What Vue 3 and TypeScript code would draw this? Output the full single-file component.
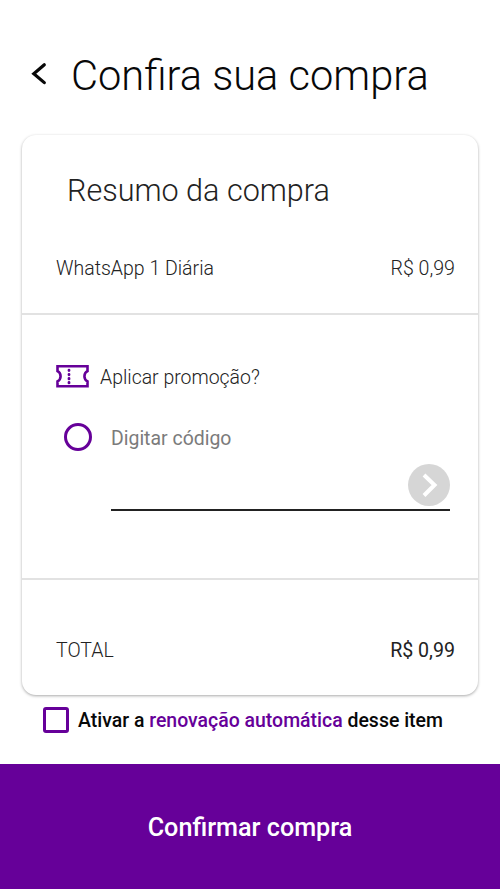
<script setup lang="ts">
const product = 'WhatsApp 1 Diária'
const price = 'R$ 0,99'
</script>

<template>
  <main class="screen">
    <header class="header">
      <svg class="back" viewBox="0 0 18 24"><path d="M14.300 2.700 3.800 11.700l10.500 8.900" /></svg>
      <h1>Confira sua compra</h1>
    </header>
    <section class="card">
      <div class="summary">
        <h2>Resumo da compra</h2>
        <div class="line"><span>{{ product }}</span><span class="price">{{ price }}</span></div>
      </div>
      <div class="promo">
        <div class="promo-title">
          <svg class="ticket" viewBox="0 0 34 24">
            <path d="M1.500 1.300H31.500V6.200C27.400 8.300 27.400 14.300 31.500 16.400V21.300H1.500V16.400C5.600 14.300 5.600 8.300 1.500 6.200Z" />
            <path class="dots" d="M13 5.200V5.600M13 9.400V9.800M13 13.500V13.900M13 17.500V17.900" />
          </svg>
          <span>Aplicar promoção?</span>
        </div>
        <div class="option"><i class="radio"></i><span>Digitar código</span></div>
        <div class="field">
          <svg viewBox="0 0 42 42"><circle cx="21" cy="21" r="21" /><path d="m16 11 10.500 10-10.500 10.500" /></svg>
        </div>
      </div>
      <div class="line total"><span>TOTAL</span><span class="price sum">{{ price }}</span></div>
    </section>
    <label class="renew"><i class="check"></i><span>Ativar a <b>renovação automática</b> desse item</span></label>
    <button class="confirm"><span>Confirmar compra</span></button>
  </main>
</template>

<style>
body { margin: 0; background: #fff; }
</style>
<style scoped>
.screen { box-sizing: border-box; width: 500px; height: 889px; display: flex; flex-direction: column; font-family: Roboto, sans-serif; color: #222; background: #fff; overflow: hidden; }
.screen * { box-sizing: border-box; }
span, h1, h2 { white-space: nowrap; }
.header { height: 135px; padding: 48px 0 0 30px; display: flex; align-items: flex-start; flex: none; }
.back { width: 18px; height: 24px; margin: 14px 23px 0 0; fill: none; stroke: #080808; stroke-width: 3.200; stroke-linecap: round; }
h1 { margin: 0; font-size: 41.600px; line-height: 56px; font-weight: 300; color: #080808; }
.card { width: 456px; height: 560px; margin-left: 22px; border-radius: 14px; background: #fff; box-shadow: 0 1px 3px rgba(0,0,0,.34); flex: none; }
.summary { height: 180px; padding: 36px 23px 0 34px; border-bottom: 2px solid #e2e2e2; }
h2 { margin: 0 0 37px 11px; font-size: 30.550px; line-height: 40px; font-weight: 300; }
.line { display: flex; justify-content: space-between; font-size: 19.500px; line-height: 42px; font-weight: 300; }
.price { font-size: 19.600px; }
.promo { height: 265px; padding: 48px 28px 0 34px; border-bottom: 2px solid #e2e2e2; }
.promo-title { display: flex; align-items: center; height: 28px; font-size: 19.450px; font-weight: 300; }
.ticket { width: 34px; height: 24px; margin-right: 10px; fill: none; stroke: #609; stroke-width: 2.600; }
.ticket .dots { stroke-width: 2.800; stroke-linecap: round; }
.option { display: flex; align-items: center; height: 28px; margin: 32px 0 0 8px; font-size: 19.450px; color: #7b7b7b; }
.option span { padding-top: 2px; }
.radio { width: 28px; height: 28px; border: 3px solid #609; border-radius: 50%; margin-right: 19px; }
.field { display: flex; justify-content: flex-end; height: 60px; margin-left: 55px; padding-top: 13px; border-bottom: 2px solid #222; }
.field svg { width: 42px; height: 42px; fill: #d6d6d6; }
.field path { fill: none; stroke: #fff; stroke-width: 4; }
.total { padding: 50px 23px 0 34px; }
.sum { font-weight: 400; }
.renew { display: flex; align-items: center; height: 26px; margin: 12px 0 0 43px; font-size: 19.470px; font-weight: 500; color: #080808; }
.renew span { padding-top: 1px; }
.check { width: 26px; height: 26px; margin-right: 9px; border: 3px solid #609; border-radius: 3px; }
b { font-weight: 500; color: #609; }
.confirm { width: 500px; height: 125px; margin: auto 0 0; padding: 2px 0 0; border: 0; background: #609; color: #fff; font: 500 25.200px Roboto, sans-serif; }
</style>
